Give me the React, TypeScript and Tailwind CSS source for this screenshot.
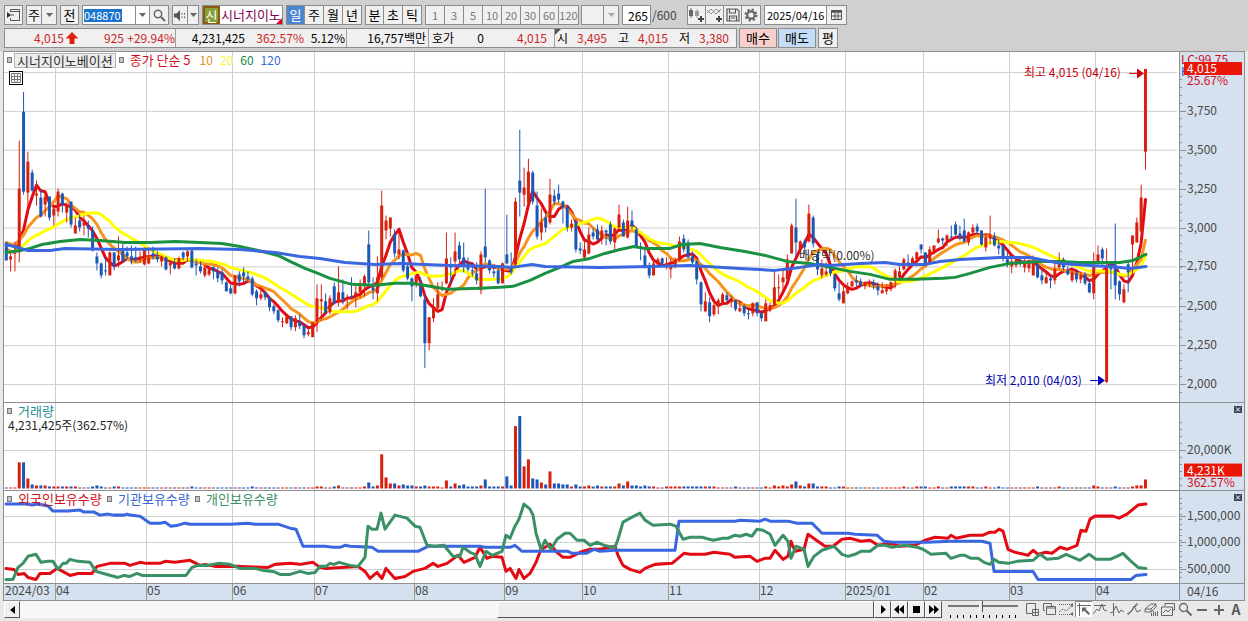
import React from "react";

type Candle = { up: boolean; h: number; t: number; b: number; l: number };

// r/b (up/down), high, body top, body bottom, low
const CANDLE_DATA = `
b 243 243 261 261;r 252 257 260 272;r 242 252 253 272;r 141 189 253 263;b 92 112 192 195;r 152 162 193 215;b 170 173 191 192;r 181 194 196 206;
b 190 198 217 218;r 192 197 205 217;b 197 197 218 221;r 205 209 216 226;r 189 192 212 217;b 193 194 205 213;r 203 205 213 223;b 202 202 225 228;
r 218 226 234 234;b 215 221 228 232;r 216 223 226 236;b 221 226 229 238;b 227 231 251 252;b 253 257 264 271;b 263 264 276 279;b 258 271 272 276;
r 252 253 276 276;b 253 253 267 271;r 237 256 261 268;b 243 250 262 263;b 247 253 257 260;b 246 257 261 265;b 247 258 261 263;r 252 257 259 263;
r 248 250 265 266;r 248 258 264 265;b 247 254 257 260;b 252 257 260 263;r 256 257 262 267;b 257 258 270 271;r 261 263 266 275;b 259 264 269 270;
r 257 259 269 270;b 252 253 258 261;r 249 252 257 262;b 251 251 268 269;b 260 264 266 276;b 262 267 272 274;r 267 268 276 278;r 266 270 275 277;
b 267 268 272 280;b 268 272 279 283;b 270 273 281 285;b 282 283 292 292;b 285 289 294 295;r 276 276 294 295;b 272 275 282 287;b 268 273 277 283;
b 272 277 280 282;b 277 279 295 297;b 290 292 299 306;r 287 295 299 301;b 292 293 298 301;b 297 298 308 312;b 305 307 312 315;b 310 311 321 323;
r 318 322 323 328;r 317 317 324 325;b 317 317 328 331;r 316 319 328 332;b 315 322 327 330;b 325 326 336 339;r 328 333 335 337;r 323 323 338 338;
r 285 299 322 333;r 285 300 302 322;b 294 302 313 315;r 296 299 313 315;b 283 287 304 305;r 267 293 302 307;b 280 293 300 305;r 295 298 300 310;
b 278 297 298 299;r 285 293 297 308;r 280 287 293 298;r 275 277 287 297;b 231 245 283 285;b 278 288 291 300;r 257 278 294 302;r 191 206 278 280;
r 216 221 231 240;r 218 218 229 237;b 230 235 254 258;r 232 250 255 260;b 250 251 271 273;b 263 267 279 281;b 278 279 287 302;r 275 276 285 288;
b 278 285 297 298;b 295 300 344 369;r 318 318 344 351;r 299 307 319 323;r 283 295 309 312;r 282 288 290 292;r 233 259 284 285;b 258 266 268 285;
r 233 252 262 277;b 242 246 260 263;b 243 258 267 273;b 258 263 270 272;b 263 271 272 277;b 263 274 281 285;r 252 255 291 295;b 189 247 258 263;
b 260 261 271 274;b 265 272 274 278;b 267 271 284 285;r 263 264 284 284;b 215 255 264 265;b 253 267 273 275;r 198 202 265 267;b 130 181 193 217;
r 168 188 195 207;r 159 172 203 205;b 171 173 202 205;b 192 206 237 240;r 209 223 233 241;b 213 218 228 233;r 179 195 223 225;b 190 196 202 205;
b 185 194 200 203;b 201 202 208 224;b 207 207 228 232;r 220 224 228 232;b 220 222 250 253;b 243 249 251 255;r 242 250 258 259;r 228 235 254 255;
b 228 233 237 240;b 225 230 240 242;r 226 231 239 245;b 230 231 233 246;b 222 225 242 245;r 228 229 243 250;r 205 215 228 230;b 220 223 237 237;
r 207 221 238 239;b 211 221 227 230;b 228 230 248 249;b 243 247 249 261;b 250 256 267 269;b 263 266 276 279;r 262 264 276 276;r 258 260 265 266;
b 258 259 264 267;r 258 264 268 270;r 259 266 270 279;r 258 260 267 269;r 237 242 261 262;b 235 239 250 253;b 240 243 258 259;b 252 257 263 266;
b 260 262 280 285;b 282 283 305 312;r 293 302 312 313;b 298 303 317 323;r 302 306 315 317;r 299 301 307 315;r 293 295 304 306;b 293 296 301 303;
r 296 299 303 308;b 300 301 310 312;r 302 309 312 313;b 305 307 314 317;b 310 314 315 320;r 303 304 314 317;b 303 303 314 317;b 312 314 319 322;
r 300 304 322 322;r 303 306 311 313;r 272 288 305 306;r 275 288 289 298;r 270 278 283 293;r 255 260 280 283;r 224 226 254 254;b 199 228 243 257;
r 241 242 250 253;b 240 242 248 255;r 205 214 242 243;b 216 218 244 248;b 252 255 270 276;r 260 269 276 279;r 263 272 275 277;b 267 268 274 277;
b 275 276 289 292;b 283 294 300 302;r 287 292 304 304;r 283 287 294 295;r 281 282 287 288;b 276 281 283 287;b 279 282 286 288;r 282 283 287 290;
r 280 283 285 288;b 280 283 286 290;b 283 287 291 296;r 283 291 294 294;r 285 290 292 295;r 282 283 290 292;r 269 271 280 289;r 267 272 278 280;
r 258 260 270 271;b 255 263 265 268;r 257 259 265 267;r 252 253 260 267;b 245 245 250 254;b 253 253 265 267;r 247 250 263 265;r 246 246 252 255;
r 230 239 243 244;b 238 239 241 245;r 235 236 241 247;b 226 237 238 240;b 222 225 235 236;b 226 234 238 241;b 219 231 242 243;r 232 233 243 246;
r 225 228 233 235;b 224 227 232 235;b 231 231 245 246;r 235 238 248 252;r 216 236 239 245;b 233 237 246 247;b 240 246 249 255;b 245 246 258 262;
b 253 260 265 268;r 257 262 267 274;r 258 261 266 268;b 258 261 264 267;r 258 262 268 273;r 260 263 269 273;r 256 263 276 276;b 263 265 278 279;
b 270 276 281 285;r 273 278 284 284;b 275 279 281 289;r 263 270 281 285;r 253 262 268 269;b 258 260 268 271;b 267 271 275 276;r 270 273 281 283;
b 270 274 280 283;r 272 276 280 284;b 273 275 284 286;b 280 284 293 294;r 253 267 294 300;r 246 255 264 265;b 248 250 259 268;r 249 267 383 384;
b 263 264 270 290;b 224 265 286 300;b 281 282 295 301;r 285 290 303 304;b 262 265 273 293;r 236 236 245 275;r 218 223 243 243;r 185 198 232 233;
r 69 69 152 170`;

const CANDLES: Candle[] = CANDLE_DATA.trim()
  .split(";")
  .map((row) => {
    const [c, h, t, b, l] = row.trim().split(" ");
    return { up: c === "r", h: +h, t: +t, b: +b, l: +l };
  });

const candleX = (i: number) => 6.3 + i * 4.315;

const MA60 =
  "6,253 20,251 30,249 42,245 60,242 80,240 100,241 125,243 150,243 175,242 200,243 222,244 240,247 258,251 278,256 290,262 305,269 318,274 330,279 352,285 375,286 395,284 412,284 430,287 447,290 480,289 500,288 513,287 530,281 545,274 560,268 573,262 590,259 605,254 620,250 634,247 645,249 670,249 682,245 700,244 720,248 745,252 765,256 787,262 810,264 830,268 850,272 870,275 890,280 915,280 943,279 955,278 970,274 990,268 1010,264 1040,262 1060,262 1080,263 1120,263 1133,261 1146,255";
const MA120 =
  "6,245 18,248 27,251 50,251 65,249 120,250 200,249 240,250 275,253 300,257 320,259 345,263 375,265 400,264 450,266 500,267 512,268 532,265 545,267 600,268 650,267 690,266 740,269 775,271 800,268 820,265 830,266 860,264 885,263 900,265 925,265 940,262 960,260 1000,258 1030,258 1060,264 1090,266 1110,267 1130,269 1146,267";

const INSTITUTION =
  "6,504 28,504 32,505 38,504 48,506 53,511 68,511 80,510 84,512 94,512 100,515 108,514 114,515 124,515 127,514 130,515 140,516 150,523 160,523 165,522 171,526 178,525 185,523 190,524 230,524 248,523 255,524 278,524 290,528 296,529 303,546 325,546 333,547 340,547 345,545 350,546 372,547 378,551 418,551 428,546 480,546 485,547 510,547 515,545 522,551 568,551 572,553 586,553 594,549 600,551 615,550 675,550 679,521 692,521 735,521 740,520 760,521 765,519 770,521 788,521 797,523 812,523 822,533 848,533 855,534 877,535 884,541 893,542 928,542 950,541 982,541 990,543 994,571 1033,571 1038,579 1131,579 1136,575 1146,574";
const FOREIGN =
  "6,568 14,569 18,574 24,573 28,577 36,579 40,573 50,573 57,568 70,575 78,573 92,573 97,566 110,563 125,563 130,565 140,562 146,563 160,563 165,561 175,562 190,560 200,565 205,564 215,566 230,566 240,566 268,567 275,564 290,563 300,564 313,562 320,567 325,568 358,566 365,571 370,578 377,572 382,578 386,568 395,578 405,576 413,571 425,568 433,563 438,566 447,563 458,555 464,562 475,557 480,547 487,558 492,556 502,557 506,571 510,568 516,578 519,569 524,578 530,573 536,562 541,549 545,547 550,544 557,552 563,557 570,557 580,552 590,549 600,549 615,546 618,555 623,565 630,569 640,572 645,568 655,564 672,563 684,553 690,554 705,554 714,552 730,554 735,557 750,556 757,561 765,558 770,558 775,550 783,559 788,556 791,541 795,551 804,549 808,534 815,539 825,546 833,546 842,539 850,538 861,541 870,540 878,545 890,543 900,546 915,545 925,540 935,537 948,538 951,535 956,538 970,535 983,535 990,532 995,532 999,529 1003,531 1008,549 1015,552 1028,555 1033,550 1038,554 1046,552 1052,553 1060,547 1067,549 1077,545 1081,530 1086,531 1090,519 1095,516 1113,516 1119,518 1127,514 1138,505 1146,504";
const INDIVIDUAL =
  "6,579 13,579 18,567 23,563 28,556 36,554 41,562 48,561 53,561 58,569 63,563 66,563 70,559 78,561 90,562 96,571 107,574 118,577 124,575 130,576 137,573 142,575 186,575 192,567 198,565 208,565 218,563 230,564 240,568 255,568 263,570 273,571 280,574 290,574 300,571 308,573 315,572 320,566 326,566 330,563 334,564 339,562 350,565 358,566 365,557 368,526 372,529 377,529 381,513 385,529 395,515 407,518 415,526 420,527 427,545 435,546 444,545 453,556 460,556 463,547 470,552 475,554 480,566 486,551 492,555 502,551 506,535 510,538 515,526 519,519 524,504 530,509 533,515 536,533 541,549 545,540 551,549 557,539 565,533 570,533 577,540 584,540 590,545 597,542 604,545 612,547 615,547 618,539 623,522 632,517 640,513 645,520 653,525 670,524 676,526 683,539 690,537 702,537 713,540 723,538 728,538 735,535 740,536 746,534 752,536 757,529 763,530 770,534 775,545 783,535 788,541 791,558 796,546 804,549 808,566 814,556 822,550 834,546 842,554 848,556 855,554 861,551 870,551 878,545 885,545 892,547 905,545 917,547 923,549 931,554 946,553 951,558 960,555 965,555 971,558 978,558 984,562 990,564 994,559 999,562 1008,563 1017,561 1033,560 1040,554 1047,559 1058,558 1066,554 1073,557 1080,560 1089,554 1096,559 1110,559 1117,556 1123,553 1130,560 1138,567 1146,568";

// bar heights, every other day is 1
const VOLUME: Record<number, number> = {
  3: 26, 4: 26, 5: 10, 6: 4, 7: 3, 8: 3, 9: 3, 10: 2, 11: 2, 12: 2, 13: 2, 14: 2, 15: 2, 16: 2, 20: 2, 21: 3, 22: 2, 25: 2, 26: 2,
  43: 2, 57: 2, 72: 2, 73: 2, 76: 2, 77: 3, 83: 2, 84: 6, 85: 2, 86: 3, 87: 34, 88: 11, 89: 5, 90: 5, 91: 3, 92: 4, 93: 3, 94: 3,
  95: 2, 96: 2, 97: 3, 98: 2, 99: 2, 100: 2, 102: 8, 103: 2, 104: 5, 105: 3, 106: 4, 107: 2, 108: 2, 109: 2, 110: 3, 111: 9, 112: 2,
  113: 2, 114: 2, 115: 2, 116: 12, 117: 3, 118: 62, 119: 72, 120: 22, 121: 29, 122: 10, 123: 9, 124: 6, 125: 4, 126: 17, 127: 5,
  128: 5, 129: 4, 130: 4, 131: 2, 132: 4, 133: 2, 134: 2, 135: 3, 136: 2, 137: 3, 138: 2, 139: 2, 140: 2, 141: 2, 142: 5, 143: 3,
  144: 7, 145: 3, 146: 3, 147: 2, 148: 3, 149: 2, 150: 2, 153: 2, 154: 2, 155: 2, 156: 2, 157: 2, 158: 2, 159: 2, 160: 2, 161: 2,
  162: 2, 163: 2, 164: 2, 169: 2, 176: 2, 178: 3, 179: 2, 180: 3, 181: 2, 182: 4, 183: 7, 184: 3, 185: 2, 186: 5, 187: 5, 188: 2,
  189: 2, 190: 2, 193: 2, 194: 2, 208: 2, 211: 2, 212: 2, 213: 2, 216: 2, 219: 2, 220: 2, 221: 2, 222: 2, 223: 2, 224: 2, 227: 2,
  230: 2, 239: 2, 244: 2, 252: 3, 253: 2, 257: 2, 261: 2, 262: 3, 263: 3, 264: 9,
};

const MONTHS = [
  { x: 55, label: "04" },
  { x: 146, label: "05" },
  { x: 232, label: "06" },
  { x: 314, label: "07" },
  { x: 414, label: "08" },
  { x: 504, label: "09" },
  { x: 582, label: "10" },
  { x: 668, label: "11" },
  { x: 759, label: "12" },
  { x: 845, label: "2025/01" },
  { x: 923, label: "02" },
  { x: 1009, label: "03" },
  { x: 1095, label: "04" },
];

const PRICE_TICKS = [
  { y: 111, label: "3,750" },
  { y: 150, label: "3,500" },
  { y: 189, label: "3,250" },
  { y: 228, label: "3,000" },
  { y: 267, label: "2,750" },
  { y: 307, label: "2,500" },
  { y: 346, label: "2,250" },
  { y: 385, label: "2,000" },
];
const VOLUME_TICKS = [{ y: 451, label: "20,000K" }];
const HOLDING_TICKS = [
  { y: 516, label: "1,500,000" },
  { y: 542, label: "1,000,000" },
  { y: 569, label: "500,000" },
];

const UP = "#d8200f";
const DOWN = "#1c57b5";

const xPct = (x: number) => `${((x - 4) / 1175) * 100}%`;

function movingAverage(days: number, before: number) {
  const closes = CANDLES.map((c) => (c.up ? c.t : c.b));
  return closes
    .map((_, i) => {
      let sum = 0;
      for (let k = i - days + 1; k <= i; k++) sum += k < 0 ? before : closes[k];
      return `${candleX(i).toFixed(1)},${(sum / days).toFixed(1)}`;
    })
    .join(" ");
}

function Line({ points, color, width = 3 }: { points: string; color: string; width?: number }) {
  return (
    <polyline
      points={points}
      fill="none"
      stroke={color}
      strokeWidth={width}
      strokeLinejoin="round"
      strokeLinecap="round"
    />
  );
}

function Plot({
  top,
  height,
  rows,
  children,
}: {
  top: number;
  height: number;
  rows: number[];
  children: React.ReactNode;
}) {
  return (
    <svg
      className="absolute inset-0 h-full w-full"
      viewBox={`4 ${top} 1175 ${height}`}
      preserveAspectRatio="none"
    >
      <g stroke="#cfcfcf" shapeRendering="crispEdges">
        {rows.map((y) => (
          <line key={y} x1={4} x2={1177} y1={y + 0.5} y2={y + 0.5} />
        ))}
        {MONTHS.map((m) => (
          <line key={m.x} x1={m.x + 0.5} x2={m.x + 0.5} y1={top} y2={top + height} />
        ))}
      </g>
      {children}
    </svg>
  );
}

function Axis({
  top,
  height,
  ticks,
  minor,
  children,
}: {
  top: number;
  height: number;
  ticks: { y: number; label: string }[];
  minor: number[];
  children?: React.ReactNode;
}) {
  const pct = (y: number) => `${((y - top) / height) * 100}%`;
  return (
    <div className="relative w-[66px] shrink-0 border-x border-[#8f8f8f] bg-[#d6e1ef]">
      <svg className="absolute inset-0 h-full w-full overflow-visible text-[12px]" fill="#474747">
        <g stroke="#8f8f8f" shapeRendering="crispEdges">
          {minor.map((y) => (
            <line key={y} x1={0} x2={2} y1={pct(y)} y2={pct(y)} />
          ))}
          {ticks.map((t) => (
            <line key={t.y} x1={0} x2={6} y1={pct(t.y + 0.5)} y2={pct(t.y + 0.5)} />
          ))}
        </g>
        {ticks.map((t) => (
          <text key={t.y} x={7} y={pct(t.y)} dy={4}>
            {t.label}
          </text>
        ))}
        {children}
      </svg>
    </div>
  );
}

const range = (from: number, to: number, step: number) => {
  const out: number[] = [];
  for (let v = from; v < to; v += step) out.push(v);
  return out;
};

function Bullet() {
  return <span className="h-[6px] w-[5px] border border-[#777] bg-[#c4c4c4]" />;
}

function ClosePanel({ label }: { label: string }) {
  return (
    <button
      aria-label={label}
      className="absolute top-[3px] right-[3px] flex h-[7px] w-[8px] items-center justify-center bg-[#3c4656]"
    >
      <svg width="6" height="5" stroke="#fff">
        <path d="M1 .5 5 4.5M5 .5 1 4.5" />
      </svg>
    </button>
  );
}

function Group({ children, className = "" }: { children: React.ReactNode; className?: string }) {
  return (
    <div className={`flex h-5 divide-x divide-[#8c8c8c] border border-[#8c8c8c] bg-[#f0f0f0] ${className}`}>
      {children}
    </div>
  );
}

function Key({
  children,
  label,
  className = "w-[19px]",
}: {
  children: React.ReactNode;
  label?: string;
  className?: string;
}) {
  return (
    <button aria-label={label} className={`flex items-center justify-center ${className}`}>
      {children}
    </button>
  );
}

function Caret({ color = "#666" }: { color?: string }) {
  return (
    <svg width="7" height="4" fill={color}>
      <path d="M0 0h7L3.5 4z" />
    </svg>
  );
}

function Toolbar() {
  return (
    <div className="flex h-5 items-center gap-[3px] text-[13px] leading-[18px] text-black">
      <Group>
        <Key label="창 열기" className="w-[17px]">
          <svg width="13" height="12" fill="none" stroke="#555">
            <path d="M3.5 3V.5h9v11h-9V9M3.5 2.5h9" />
            <path d="M0 3v6l4-3z" fill="#333" stroke="none" />
            <path d="M3.5 6H7" />
          </svg>
        </Key>
      </Group>
      <Group>
        <Key className="w-[15px]">주</Key>
        <Key label="종목 구분" className="w-[14px]">
          <Caret />
        </Key>
      </Group>
      <Group>
        <Key className="w-[17px]">전</Key>
      </Group>
      <Group className="!bg-white">
        <div className="flex w-[53px] items-center">
          <input
            aria-label="종목코드"
            defaultValue="048870"
            className="ml-px w-[38px] bg-[#1874cd] text-[11px] leading-[13px] text-white outline-none"
          />
        </div>
        <Key label="최근 종목" className="w-[14px]">
          <Caret />
        </Key>
        <Key label="종목 검색" className="w-[18px] bg-[#f0f0f0]">
          <svg width="13" height="13" fill="none" stroke="#666" strokeWidth="1.5">
            <circle cx="5" cy="5" r="3.7" />
            <path d="m8 8 4 4" strokeWidth="2" />
          </svg>
        </Key>
      </Group>
      <Group>
        <Key label="소리" className="w-[15px]">
          <svg width="12" height="11" fill="#555">
            <path d="M0 3.5h2.5L6 0v11L2.5 7.5H0z" />
            <path d="M7.5 3h1v1.5h-1zM7.5 6.5h1V8h-1zM10 3h1v1.5h-1zM10 6.5h1V8h-1z" />
          </svg>
        </Key>
        <Key label="소리 메뉴" className="w-[10px]">
          <Caret />
        </Key>
      </Group>
      <div className="relative flex h-5 w-[81px] items-center border border-[#8c8c8c] bg-white">
        <span className="flex h-[18px] w-[17px] items-center justify-center border-2 border-[#8a5a10] bg-[#86a03c] leading-none text-white">
          신
        </span>
        <span className="pl-px whitespace-nowrap text-[#80004f]">시너지이노</span>
        <svg className="absolute right-0 bottom-0" width="6" height="6" fill="#e00020">
          <path d="M6 0v6H0z" />
        </svg>
      </div>
      <Group>
        <Key className="w-[18px] bg-[#4a86d0] text-white">일</Key>
        <Key>주</Key>
        <Key>월</Key>
        <Key className="w-[18px]">년</Key>
      </Group>
      <Group>
        <Key className="w-[18px]">분</Key>
        <Key>초</Key>
        <Key className="w-[18px]">틱</Key>
      </Group>
      <Group className="text-[11px] text-[#777]">
        {["1", "3", "5", "10", "20", "30", "60", "120"].map((n) => (
          <Key key={n}>{n}</Key>
        ))}
      </Group>
      <Group className="-ml-px">
        <span className="w-[22px]" />
        <Key label="분 간격" className="w-[14px]">
          <Caret color="#aaa" />
        </Key>
      </Group>
      <div className="flex items-center">
        <input
          aria-label="조회 개수"
          defaultValue="265"
          className="h-5 w-[29px] border border-[#8c8c8c] bg-white pr-[2px] text-right text-[12px] leading-[16px] outline-none"
        />
        <span className="w-[33px] pl-px text-[12px] text-[#444]">/600</span>
      </div>
      <Group>
        <Key label="차트 추가" className="w-[18px]">
          <svg width="16" height="14" fill="#666">
            <path d="M0 2h4v6H0zM1.5 0h1v10h-1z" />
            <path d="M6 3h4v5H6zM7.500 1h1v9h-1z" fill="#999" />
            <path d="M11 8h2v2h2v2h-2v2h-2v-2H9v-2h2z" fill="#444" />
          </svg>
        </Key>
        <Key label="지표 추가" className="w-[18px]">
          <svg width="16" height="14" fill="none" stroke="#777">
            <path d="m0 5 4-4 5 5 5-5M0 2l4 4 5-5 4 3" strokeWidth=".8" />
            <path d="M12 8v6M9 11h6" stroke="#444" strokeWidth="2" />
          </svg>
        </Key>
        <Key label="저장" className="w-[18px]">
          <svg width="14" height="14" fill="none" stroke="#555" strokeWidth="1.2">
            <path d="M1 1h10l2 2v10H1zM3.5 1v4h6V1M3.5 13V8h7v5M5 10h4" />
          </svg>
        </Key>
        <Key label="설정" className="w-[18px]">
          <svg width="14" height="14" fill="none" stroke="#666">
            <circle cx="7" cy="7" r="3.7" strokeWidth="2.2" />
            <circle cx="7" cy="7" r="5.5" strokeWidth="2" strokeDasharray="2.16 2.16" />
          </svg>
        </Key>
      </Group>
      <Group className="!bg-white">
        <input
          aria-label="기준일"
          defaultValue="2025/04/16"
          className="w-[62px] pl-[2px] text-[11px] outline-none"
        />
        <Key label="달력" className="w-[19px] bg-[#f0f0f0]">
          <svg width="11" height="10" fill="none" stroke="#555">
            <path d="M.5.5h10v9H.5zM4 3v6M7 3v6M.5 6h10" />
            <path d="M0 1.5h11" strokeWidth="2.5" />
          </svg>
        </Key>
      </Group>
    </div>
  );
}

function QuoteBar() {
  return (
    <div className="flex h-5 items-stretch text-[12px] leading-[18px] text-black">
      <div className="flex divide-x divide-[#a0a0a0] border border-[#8c8c8c] bg-[#f0f0f0]">
        <div className="flex w-[171px] items-center text-right whitespace-nowrap text-[#cc1f1f]">
          <span className="w-[59px]">4,015</span>
          <svg className="ml-px" width="14" height="13" fill="#e0200f">
            <path d="M7 0l6.5 6.5H9.5V12h-5V6.5H.5z" />
          </svg>
          <span className="w-[45px]">925</span>
          <span className="w-[51px]">+29.94%</span>
        </div>
        <div className="flex w-[171px] text-right">
          <span className="w-[69px]">4,231,425</span>
          <span className="w-[59px] text-[#cc1f1f]">362.57%</span>
          <span className="w-[41px]">5.12%</span>
        </div>
        <div className="w-[82px] pr-[2px] text-right">16,757백만</div>
        <div className="flex w-[126px]">
          <span className="w-[27px] pl-[3px]">호가</span>
          <span className="w-[28px] text-right">0</span>
          <span className="w-[63px] text-right text-[#cc1f1f]">4,015</span>
        </div>
        <div className="relative flex w-[181px] text-right text-[#cc1f1f]">
          <svg className="absolute top-0 left-0" width="6" height="6" fill="#555">
            <path d="M0 0h6L0 6z" />
          </svg>
          <span className="w-[13px] text-black">시</span>
          <span className="w-[39px]">3,495</span>
          <span className="w-[22px] text-black">고</span>
          <span className="w-[39px]">4,015</span>
          <span className="w-[22px] text-black">저</span>
          <span className="w-[39px]">3,380</span>
        </div>
      </div>
      <button className="ml-[2px] w-[38px] border border-[#8c8c8c] bg-[#f8cfcb] text-[13px]">매수</button>
      <button className="ml-px w-[38px] border border-[#8c8c8c] bg-[#c4dcf6] text-[13px]">매도</button>
      <button className="ml-[2px] w-[20px] border border-[#8c8c8c] bg-[#f0f0f0] text-[13px]">평</button>
    </div>
  );
}

function PricePanel() {
  return (
    <section className="flex min-h-0 flex-[352_1_0%] border-t border-[#8f8f8f]">
      <div className="relative min-w-0 flex-1 bg-white">
        <Plot top={52} height={351} rows={[72, ...PRICE_TICKS.map((t) => t.y)]}>
          <Line points={movingAverage(5, 247)} color="#e30a14" />
          <Line points={movingAverage(10, 241)} color="#f7941e" />
          <Line points={movingAverage(20, 251)} color="#ffff00" />
          {CANDLES.map((c, i) => (
            <g key={i} fill={c.up ? UP : DOWN}>
              <rect x={candleX(i) - 0.5} y={c.h} width={1} height={c.l - c.h} />
              <rect x={candleX(i) - 1.5} y={c.t} width={3} height={Math.max(1, c.b - c.t)} />
            </g>
          ))}
          <Line points={MA60} color="#1a9140" />
          <Line points={MA120} color="#3a66e0" />
          <path d="M1129 73.5h10" stroke="#d8000c" />
          <path d="M1137 68.5l7 5-7 5z" fill="#d8000c" />
          <path d="M1090 381.5h10" stroke="#0000c8" />
          <path d="M1098 376.5l7 5-7 5z" fill="#0000c8" />
        </Plot>
        <svg className="absolute inset-0 h-full w-full text-[12px]">
          <text x={xPct(1024)} y="7.2%" fill="#c8000c">
            최고 4,015 (04/16)
          </text>
          <text x={xPct(985)} y="95%" fill="#0000b0">
            최저 2,010 (04/03)
          </text>
          <text x={xPct(799)} y="59.4%" fill="#333">
            배당락(0.00%)
          </text>
        </svg>
        <div className="absolute top-0 left-[3px] flex h-4 items-center text-[12px] whitespace-nowrap">
          <Bullet />
          <span className="ml-[2px] border border-[#b4b4b4] bg-[#ececec] px-[2px] text-[13px] leading-[13px] text-[#333]">
            시너지이노베이션
          </span>
          <span className="ml-[3px] flex">
            <Bullet />
          </span>
          <span className="ml-[6px] text-[13px] text-[#d0101c]">종가 단순 5</span>
          <span className="ml-[9px] text-[#e0901c]">10</span>
          <span className="ml-[7px] text-[#f5f53c]">20</span>
          <span className="ml-[7px] text-[#1a8a40]">60</span>
          <span className="ml-[7px] text-[#3a66d0]">120</span>
        </div>
        <button
          aria-label="표 보기"
          className="absolute top-[19px] left-[5px] flex h-[14px] w-[14px] items-center justify-center border border-black bg-white"
        >
          <svg width="10" height="10" fill="none" stroke="#777">
            <path d="M.5.5h9v9h-9zM3.5 0v10M6.5 0v10M0 3.5h10M0 6.5h10" />
          </svg>
        </button>
      </div>
      <Axis top={52} height={351} ticks={PRICE_TICKS} minor={range(80, 400, 7.825)}>
        <text x={1} y={12} fill="#d0101c">
          LC:99.75
        </text>
        <text x={1} y={24} fill="#1c57b5">
          H
        </text>
        <text x={7} y={33} fill="#d0101c">
          25.67%
        </text>
        <rect x={4} y={10} width={58} height={13} fill="#ea1608" />
        <text x={7} y={21} fill="#fff">
          4,015
        </text>
      </Axis>
    </section>
  );
}

function VolumePanel() {
  return (
    <section className="flex min-h-0 flex-[87_1_0%] border-t border-[#8f8f8f]">
      <div className="relative min-w-0 flex-1 bg-white">
        <Plot top={404} height={86} rows={[451]}>
          {CANDLES.map((c, i) => {
            const h = VOLUME[i] ?? 1;
            return (
              <rect key={i} x={candleX(i) - 1.5} y={489 - h} width={3} height={h} fill={c.up ? UP : DOWN} />
            );
          })}
        </Plot>
        <div className="absolute top-[1px] left-[3px] text-[12px] leading-[14px]">
          <div className="flex items-center gap-[6px] text-[13px] text-[#1f8c96]">
            <Bullet />
            거래량
          </div>
          <div className="pl-px text-[#222]">4,231,425주(362.57%)</div>
        </div>
      </div>
      <div className="relative flex">
        <Axis top={404} height={86} ticks={VOLUME_TICKS} minor={range(423, 490, 7)}>
          <rect x={4} y="70%" width={58} height={13} fill="#ea1608" />
          <text x={7} y="70%" dy={11} fill="#fff">
            4,231K
          </text>
          <text x={7} y="97%" fill="#d0101c">
            362.57%
          </text>
        </Axis>
        <ClosePanel label="거래량 닫기" />
      </div>
    </section>
  );
}

function HoldingPanel() {
  return (
    <section className="flex min-h-0 flex-[93_1_0%] border-t border-[#8f8f8f]">
      <div className="relative min-w-0 flex-1 bg-white">
        <Plot top={491} height={92} rows={HOLDING_TICKS.map((t) => t.y)}>
          <Line points={FOREIGN} color="#e30a14" />
          <Line points={INSTITUTION} color="#3a66e0" />
          <Line points={INDIVIDUAL} color="#3a9166" />
        </Plot>
        <div className="absolute top-[1px] left-[3px] flex items-center text-[13px] leading-[14px] whitespace-nowrap">
          <Bullet />
          <span className="ml-[6px] w-[89px] text-[#d0101c]">외국인보유수량</span>
          <Bullet />
          <span className="ml-[6px] w-[77px] text-[#3a66d0]">기관보유수량</span>
          <Bullet />
          <span className="ml-[6px] text-[#3a9166]">개인보유수량</span>
        </div>
      </div>
      <div className="relative flex">
        <Axis top={491} height={92} ticks={HOLDING_TICKS} minor={range(498, 582, 5.3)} />
        <ClosePanel label="보유수량 닫기" />
      </div>
    </section>
  );
}

function DateAxis() {
  return (
    <div className="flex h-[18px] shrink-0 border-y border-[#8f8f8f] bg-[#d6e1ef] text-[12px]">
      <svg className="h-full min-w-0 flex-1 overflow-visible" fill="#474747">
        <text x={1} y={11}>
          2024/03
        </text>
        {MONTHS.map((m) => (
          <g key={m.x}>
            <line x1={xPct(m.x + 0.5)} x2={xPct(m.x + 0.5)} y1={0} y2={16} stroke="#9a9a9a" />
            <text x={xPct(m.x + 1)} y={11}>
              {m.label}
            </text>
          </g>
        ))}
      </svg>
      <div className="w-[66px] border-x border-[#8f8f8f] pl-[7px] leading-[14px] text-[#474747]">04/16</div>
    </div>
  );
}

const TOOLS: { label: string; active?: boolean; art: React.ReactNode }[] = [
  { label: "창 추가", art: <path d="M8 11.5H1.5v-10h9V7M7.5 7.5h6v6h-6zM10.5 7v7M7 10.5h7" /> },
  { label: "창 복사", art: <path d="M3 8.5H1.5v-7h8V4M4.5 4.5h9v8h-9zM4.5 6h9" /> },
  {
    label: "추세 영역",
    art: (
      <>
        <path d="M0 2.5h14M0 12.5h14" strokeDasharray="1 1" />
        <path d="m0 10 4-3 3 2 6-5" strokeDasharray="2 1" />
        <path d="M14 1v4l-3-2zM14 10v4l-3-2z" fill="#666" stroke="none" />
      </>
    ),
  },
  {
    label: "십자선",
    active: true,
    art: (
      <>
        <path d="M2.5 1v13M0 3.5h14" />
        <path d="M5 5.5h5L8.5 7l4.500 4.500-1.500 1.500L7 8.500 5 10.500z" fill="#666" stroke="none" />
      </>
    ),
  },
  { label: "수평선", art: <path d="M1 3.5h12M0 12l4-5 2 2 3-7 2 6 3 1" /> },
  { label: "수직선", art: <path d="M3.5 1v13M0 11l3-1 3-6 3 7 2-3 3 2" /> },
  { label: "추세선", art: <path d="m1 13 9-12M0 12l5-3 2-5 3 6 4-2M8 5l3-3" /> },
  {
    label: "지우개",
    art: (
      <>
        <path d="m1 7 6-5h5L7 7zM1 7v3h6V7M7 10l5-5V2" />
        <path d="M7.5 14v-3M9.5 14V9M11.5 14v-4M13.5 14v-5" />
      </>
    ),
  },
  { label: "이미지", art: <path d="M4 4V1.5h9.5V8H12M.5 5h11v8.5H.5zM2 11l3-3 2 2 3-3" /> },
  {
    label: "확대경",
    art: (
      <>
        <circle cx="5.5" cy="5.5" r="4" strokeWidth="1.3" />
        <path d="m8.5 8.5 5 5" strokeWidth="2" />
      </>
    ),
  },
  { label: "축소", art: <path d="M2 8h10" strokeWidth="2" /> },
  { label: "확대", art: <path d="M2 8h10M7 3v10" strokeWidth="2" /> },
];

const PLAYBACK = [
  { label: "재생", d: "M4 1v9l5-4.5z" },
  { label: "뒤로", d: "M5 1v9L0 5.5zM10 1v9L5 5.5z" },
  { label: "정지", d: "M2 2h7v7H2z" },
  { label: "앞으로", d: "M1 1v9l5-4.5zM6 1v9l5-4.5z" },
];

const RAISED = "border border-t-white border-l-white border-r-[#555] border-b-[#555]";

function BottomBar() {
  return (
    <div className="flex h-5 shrink-0 items-start">
      <button
        aria-label="이전"
        className={`flex h-[17px] w-4 items-center justify-center bg-[#f0f0f0] ${RAISED}`}
      >
        <svg width="5" height="8">
          <path d="M5 0v8L0 4z" />
        </svg>
      </button>
      <div className="h-[17px] flex-[479_1_0%] bg-[#f7f7f7]" />
      <div className={`h-[17px] flex-[377_1_0%] bg-[#eee] ${RAISED}`} />
      <div className="flex">
        {PLAYBACK.map((b) => (
          <button
            key={b.label}
            aria-label={b.label}
            className={`flex h-[17px] w-[17px] items-center justify-center bg-[#f0f0f0] ${RAISED}`}
          >
            <svg width="11" height="11">
              <path d={b.d} />
            </svg>
          </button>
        ))}
      </div>
      <div className="ml-[6px] w-[70px]">
        <input
          type="range"
          aria-label="확대 비율"
          defaultValue={47}
          className="block h-[11px] w-full appearance-none bg-[linear-gradient(#777,#777)] bg-[length:100%_2px] bg-[position:0_4px] bg-no-repeat [&::-webkit-slider-thumb]:h-[11px] [&::-webkit-slider-thumb]:w-[4px] [&::-webkit-slider-thumb]:appearance-none [&::-webkit-slider-thumb]:border-x [&::-webkit-slider-thumb]:border-l-white [&::-webkit-slider-thumb]:border-r-[#555] [&::-webkit-slider-thumb]:bg-[#e8e8e8]"
        />
        <div className="flex justify-between px-[2px] pt-[3px]">
          {range(0, 11, 1).map((t) => (
            <span key={t} className="h-[3px] w-px bg-black" />
          ))}
        </div>
      </div>
      <div className="ml-[6px] flex">
        {TOOLS.map((t) => (
          <button
            key={t.label}
            aria-label={t.label}
            className={`flex h-4 w-[17px] items-center justify-center ${
              t.active ? "border-t border-l border-[#888] bg-white" : ""
            }`}
          >
            <svg width="15" height="15" fill="none" stroke="#666">
              {t.art}
            </svg>
          </button>
        ))}
        <button className="h-4 w-4 text-[14px] leading-[16px] font-bold text-[#555]">A</button>
      </div>
    </div>
  );
}

export default function App() {
  return (
    <div className="flex h-screen flex-col overflow-hidden bg-[#e9e9e9] font-['Noto_Sans_CJK_KR',sans-serif]">
      <header className="flex shrink-0 flex-col gap-[3px] bg-[#d0d0d0] px-1 pt-[5px] pb-[3px]">
        <Toolbar />
        <QuoteBar />
      </header>
      <main className="mx-[3px] flex min-h-0 flex-1 flex-col border-l border-[#8f8f8f]">
        <PricePanel />
        <VolumePanel />
        <HoldingPanel />
        <DateAxis />
      </main>
      <footer className="px-1">
        <BottomBar />
      </footer>
    </div>
  );
}
